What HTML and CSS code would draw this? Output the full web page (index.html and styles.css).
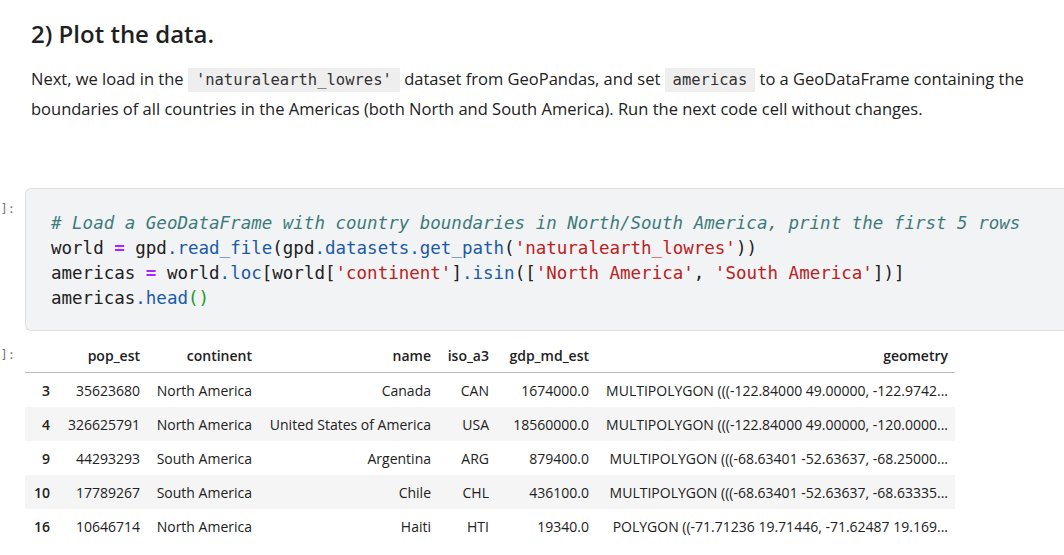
FILE: index.html
```html
<!DOCTYPE html>
<html>
<head>
<meta charset="utf-8">
<link rel="stylesheet" href="styles.css">
</head>
<body>
<div class="notebook">
  <div class="cell md-cell">
    <div class="prompt"></div>
    <div class="md">
      <h2 class="title">2) Plot the data.</h2>
      <p class="para">Next, we load in the <code class="ic">'naturalearth_lowres'</code> dataset from GeoPandas, and set <code class="ic">americas</code> to a GeoDataFrame containing the<br>boundaries of all countries in the Americas (both North and South America). Run the next code cell without changes.</p>
    </div>
  </div>

  <div class="cell code-cell">
    <div class="prompt code-prompt"><span>]:</span></div>
    <div class="editor">
      <div class="line"><span class="cm"># Load a GeoDataFrame with country boundaries in North/South America, print the first 5 rows</span></div>
      <div class="line">world <span class="op">=</span> gpd<span class="pr">.read_file</span>(gpd<span class="pr">.datasets.get_path</span>(<span class="st">'naturalearth_lowres'</span>))</div>
      <div class="line">americas <span class="op">=</span> world<span class="pr">.loc</span>[world[<span class="st">'continent'</span>]<span class="pr">.isin</span>([<span class="st">'North America'</span>, <span class="st">'South America'</span>])]</div>
      <div class="line">americas<span class="pr">.head</span><span class="mb">()</span></div>
    </div>
  </div>

  <div class="cell out-cell">
    <div class="prompt out-prompt"><span>]:</span></div>
    <div class="output">
      <table class="df">
        <colgroup>
          <col class="c-idx"><col class="c-pop"><col class="c-cont"><col class="c-name"><col class="c-iso"><col class="c-gdp"><col class="c-geo">
        </colgroup>
        <thead>
          <tr><th></th><th>pop_est</th><th>continent</th><th>name</th><th>iso_a3</th><th>gdp_md_est</th><th>geometry</th></tr>
        </thead>
        <tbody>
          <tr><th>3</th><td>35623680</td><td>North America</td><td>Canada</td><td>CAN</td><td>1674000.0</td><td>MULTIPOLYGON (((-122.84000 49.00000, -122.9742...</td></tr>
          <tr><th>4</th><td>326625791</td><td>North America</td><td>United States of America</td><td>USA</td><td>18560000.0</td><td>MULTIPOLYGON (((-122.84000 49.00000, -120.0000...</td></tr>
          <tr><th>9</th><td>44293293</td><td>South America</td><td>Argentina</td><td>ARG</td><td>879400.0</td><td>MULTIPOLYGON (((-68.63401 -52.63637, -68.25000...</td></tr>
          <tr><th>10</th><td>17789267</td><td>South America</td><td>Chile</td><td>CHL</td><td>436100.0</td><td>MULTIPOLYGON (((-68.63401 -52.63637, -68.63335...</td></tr>
          <tr><th>16</th><td>10646714</td><td>North America</td><td>Haiti</td><td>HTI</td><td>19340.0</td><td>POLYGON ((-71.71236 19.71446, -71.62487 19.169...</td></tr>
        </tbody>
      </table>
    </div>
  </div>
</div>
</body>
</html>
```

FILE: styles.css
```css
html, body {
  margin: 0;
  padding: 0;
  background: #ffffff;
  overflow: hidden;
}
body {
  font-family: "Open Sans", "Noto Sans", sans-serif;
  color: #212121;
  width: 1064px;
  height: 555px;
}
.notebook {
  display: flex;
  flex-direction: column;
}
.cell {
  display: flex;
}
.prompt {
  width: 25px;
  flex: none;
  display: flex;
  justify-content: flex-end;
  font-family: "DejaVu Sans Mono", monospace;
  font-size: 12px;
  color: #757575;
  white-space: nowrap;
}
.prompt span {
  flex: none;
  padding-right: 10px;
}
.md {
  padding-left: 6px;
  flex: 1;
}
.title {
  margin: 0;
  padding-top: 17px;
  font-size: 24px;
  font-weight: 600;
  line-height: 34px;
  color: #1f1f1f;
}
.para {
  margin: 13px 0 0 0;
  font-size: 16.5px;
  line-height: 30px;
  color: #212121;
  width: 1010px;
}
.ic {
  display: inline-block;
  font-family: "DejaVu Sans Mono", monospace;
  font-size: 15.5px;
  line-height: 24px;
  background: #eeeeee;
  padding: 0 8px;
  color: #333;
}
.code-cell {
  margin-top: 64px;
}
.code-prompt {
  padding-top: 14px;
}
.editor {
  flex: none;
  width: 1060px;
  height: 143px;
  background: #f2f3f5;
  border: 1px solid #dedede;
  border-right: none;
  border-radius: 6px 0 0 6px;
  box-sizing: border-box;
  padding: 22px 0 0 25px;
  font-family: "DejaVu Sans Mono", monospace;
  font-size: 17.5px;
  color: #212121;
}
.line {
  white-space: pre;
  line-height: 25px;
  height: 25px;
}
.cm { color: #3d7b7b; font-style: italic; }
.op { color: #aa22ff; font-weight: bold; }
.pr { color: #1a5aa6; }
.st { color: #ba2121; }
.mb { color: #1a9a1a; }
.out-cell {
  margin-top: 7px;
}
.out-prompt {
  padding-top: 10px;
}
.df {
  border-collapse: collapse;
  table-layout: fixed;
  width: 930px;
  font-size: 14px;
  color: #212121;
}
.c-idx { width: 32px; }
.c-pop { width: 90px; }
.c-cont { width: 112px; }
.c-name { width: 179px; }
.c-iso { width: 58px; }
.c-gdp { width: 100px; }
.c-geo { width: 359px; }
.df th, .df td {
  text-align: right;
  padding: 0 7px;
  height: 34px;
  white-space: nowrap;
  overflow: hidden;
}
.df thead th {
  font-weight: 600;
  border-bottom: 1px solid #bdbdbd;
}
.df tbody th {
  font-weight: 600;
}
.df tbody tr:nth-child(even) {
  background: #f5f5f5;
}
```
